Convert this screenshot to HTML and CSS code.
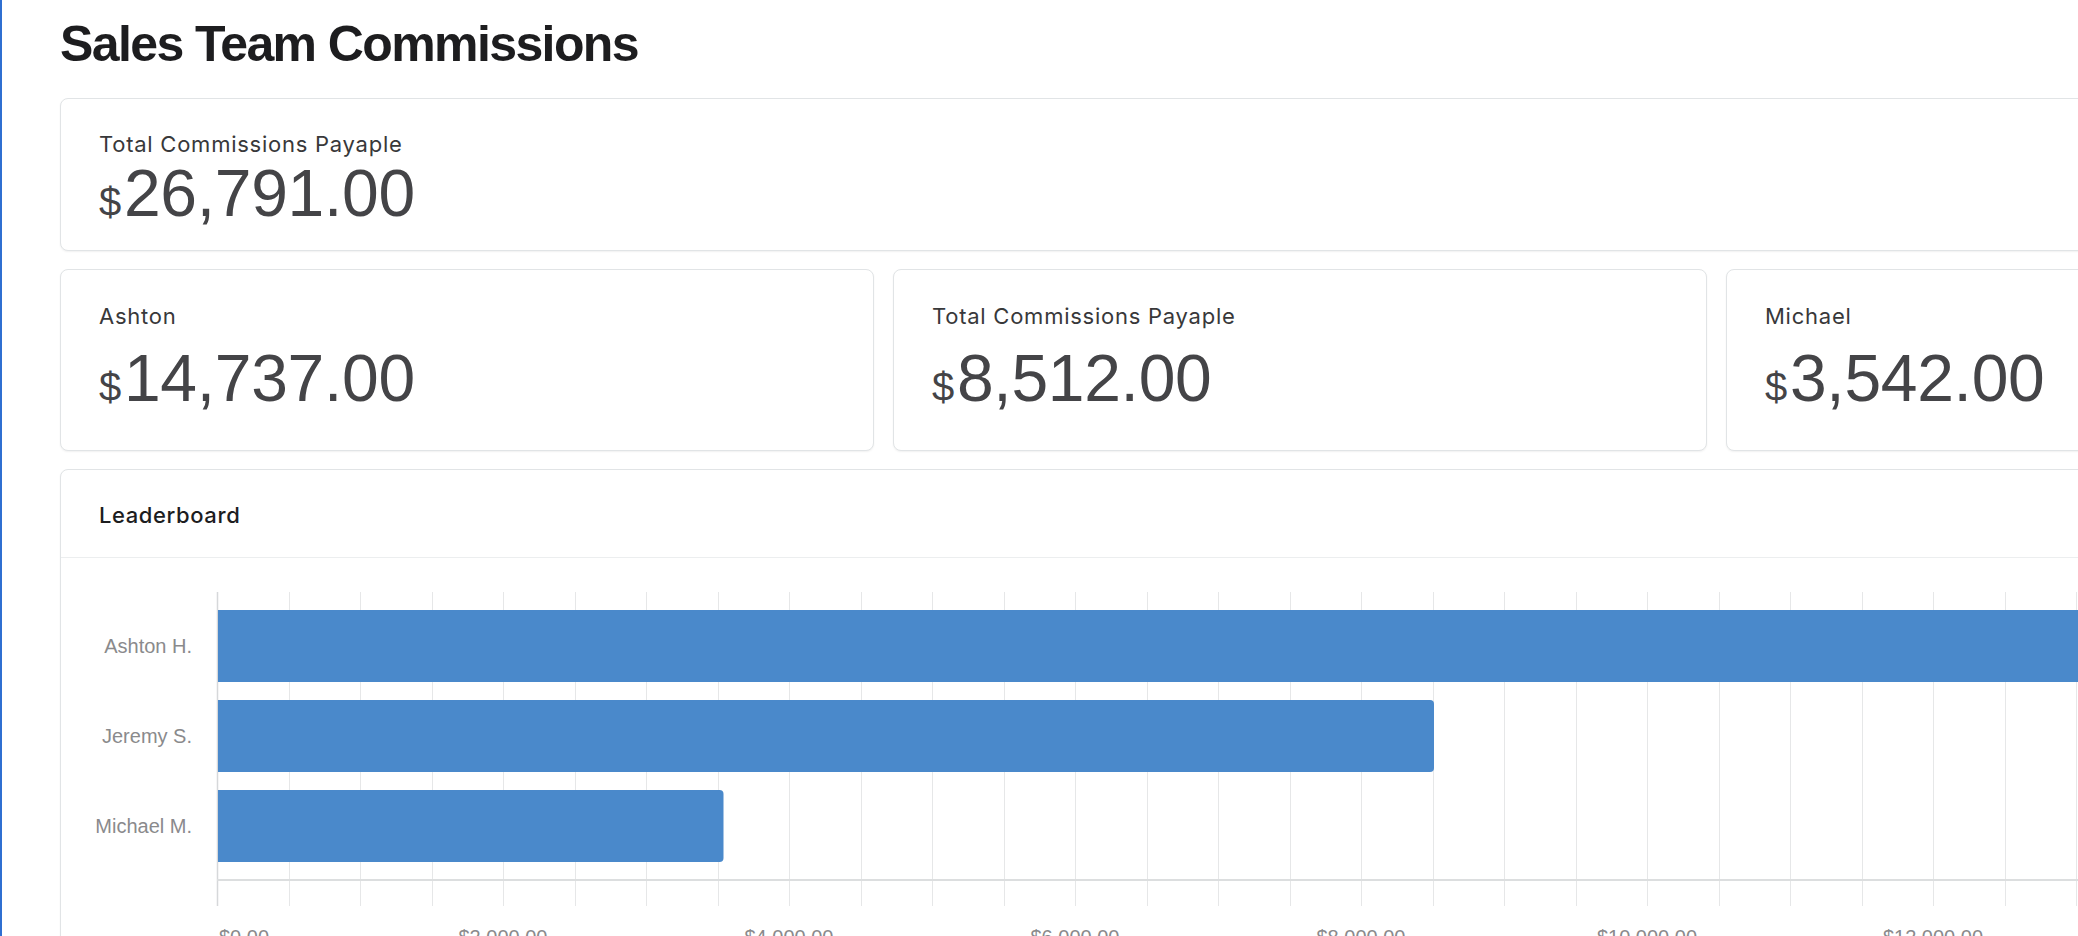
FILE: index.html
```html
<!DOCTYPE html>
<html lang="en">
<head>
<meta charset="utf-8">
<title>Sales Team Commissions</title>
<link rel="stylesheet" href="styles.css">
</head>
<body>
<div class="frame">
  <h1 class="title">Sales Team Commissions</h1>

  <section class="card stat stat-total">
    <div class="stat-label">Total Commissions Payaple</div>
    <div class="stat-value"><span class="cur">$</span>26,791.00</div>
  </section>

  <div class="stat-row">
    <section class="card stat">
      <div class="stat-label">Ashton</div>
      <div class="stat-value"><span class="cur">$</span>14,737.00</div>
    </section>
    <section class="card stat">
      <div class="stat-label">Total Commissions Payaple</div>
      <div class="stat-value"><span class="cur">$</span>8,512.00</div>
    </section>
    <section class="card stat">
      <div class="stat-label">Michael</div>
      <div class="stat-value"><span class="cur">$</span>3,542.00</div>
    </section>
  </div>

  <section class="card board">
    <header class="board-head">Leaderboard</header>
    <div class="board-body">
      <svg class="chart" width="2478" height="420" viewBox="0 0 2478 420" xmlns="http://www.w3.org/2000/svg">
        <g class="grid" stroke="#e6e7e8" stroke-width="1">
          <line x1="228.5" y1="34" x2="228.5" y2="348"/>
          <line x1="299.5" y1="34" x2="299.5" y2="348"/>
          <line x1="371.5" y1="34" x2="371.5" y2="348"/>
          <line x1="442.5" y1="34" x2="442.5" y2="348"/>
          <line x1="514.5" y1="34" x2="514.5" y2="348"/>
          <line x1="585.5" y1="34" x2="585.5" y2="348"/>
          <line x1="657.5" y1="34" x2="657.5" y2="348"/>
          <line x1="728.5" y1="34" x2="728.5" y2="348"/>
          <line x1="800.5" y1="34" x2="800.5" y2="348"/>
          <line x1="871.5" y1="34" x2="871.5" y2="348"/>
          <line x1="943.5" y1="34" x2="943.5" y2="348"/>
          <line x1="1014.5" y1="34" x2="1014.5" y2="348"/>
          <line x1="1086.5" y1="34" x2="1086.5" y2="348"/>
          <line x1="1157.5" y1="34" x2="1157.5" y2="348"/>
          <line x1="1229.5" y1="34" x2="1229.5" y2="348"/>
          <line x1="1300.5" y1="34" x2="1300.5" y2="348"/>
          <line x1="1372.5" y1="34" x2="1372.5" y2="348"/>
          <line x1="1443.5" y1="34" x2="1443.5" y2="348"/>
          <line x1="1515.5" y1="34" x2="1515.5" y2="348"/>
          <line x1="1586.5" y1="34" x2="1586.5" y2="348"/>
          <line x1="1658.5" y1="34" x2="1658.5" y2="348"/>
          <line x1="1729.5" y1="34" x2="1729.5" y2="348"/>
          <line x1="1801.5" y1="34" x2="1801.5" y2="348"/>
          <line x1="1872.5" y1="34" x2="1872.5" y2="348"/>
          <line x1="1944.5" y1="34" x2="1944.5" y2="348"/>
          <line x1="2015.5" y1="34" x2="2015.5" y2="348"/>
          <line x1="2087.5" y1="34" x2="2087.5" y2="348"/>
          <line x1="2158.5" y1="34" x2="2158.5" y2="348"/>
          <line x1="2230.5" y1="34" x2="2230.5" y2="348"/>
          <line x1="2301.5" y1="34" x2="2301.5" y2="348"/>
        </g>
        <line x1="156.5" y1="34" x2="156.5" y2="348" stroke="#d6d8da" stroke-width="1.5"/>
        <line x1="156" y1="322" x2="2302" y2="322" stroke="#dcdedf" stroke-width="2"/>
        <g class="bars" fill="#4a89cb">
          <path d="M157 52 H2259 a4 4 0 0 1 4 4 V120 a4 4 0 0 1 -4 4 H157 Z"/>
          <path d="M157 142 H1369 a4 4 0 0 1 4 4 V210 a4 4 0 0 1 -4 4 H157 Z"/>
          <path d="M157 232 H658.5 a4 4 0 0 1 4 4 V300 a4 4 0 0 1 -4 4 H157 Z"/>
        </g>
        <g class="ylabels" text-anchor="end">
          <text x="131" y="95">Ashton H.</text>
          <text x="131" y="185">Jeremy S.</text>
          <text x="131" y="275">Michael M.</text>
        </g>
        <g class="xlabels" text-anchor="middle">
          <text x="158" y="386" text-anchor="start">$0.00</text>
          <text x="442" y="386">$2,000.00</text>
          <text x="728" y="386">$4,000.00</text>
          <text x="1014" y="386">$6,000.00</text>
          <text x="1300" y="386">$8,000.00</text>
          <text x="1586" y="386">$10,000.00</text>
          <text x="1872" y="386">$12,000.00</text>
          <text x="2158" y="386">$14,000.00</text>
        </g>
      </svg>
    </div>
  </section>
</div>
</body>
</html>
```
FILE: styles.css
```css
html, body {
  margin: 0;
  padding: 0;
  overflow: hidden;
  background: #ffffff;
}

.frame {
  box-sizing: border-box;
  width: 2600px;
  min-height: 936px;
  border-left: 2px solid #2f6fd1;
  padding: 14px 0 0 58px;
}

.title {
  margin: 0 0 24px;
  font-family: "Liberation Sans", Arial, sans-serif;
  font-weight: 700;
  font-size: 50px;
  line-height: 60px;
  letter-spacing: -1.6px;
  color: #1d1d1f;
}

.card {
  box-sizing: border-box;
  width: 2480px;
  background: #ffffff;
  border: 1px solid #e1e4e6;
  border-radius: 8px;
  box-shadow: 0 1px 2px rgba(0, 0, 0, 0.06);
}

.stat-total {
  padding: 32px 38px 21px;
  margin-bottom: 18px;
}

.stat-row {
  display: grid;
  grid-template-columns: repeat(3, 1fr);
  gap: 19px;
  width: 2480px;
  margin-bottom: 18px;
}

.stat-row .card {
  width: auto;
  padding: 33px 38px 36px;
}

.stat-label {
  font-family: Inter, "Liberation Sans", sans-serif;
  font-weight: 400;
  font-size: 22px;
  line-height: 26px;
  letter-spacing: 0.75px;
  color: #38383a;
}

.stat-value {
  font-family: "Liberation Sans", Arial, sans-serif;
  font-weight: 400;
  font-size: 66px;
  line-height: 72px;
  letter-spacing: -0.3px;
  color: #444447;
}

.stat-row .stat-value {
  margin-top: 13px;
}

.cur {
  font-size: 40px;
  line-height: 1;
  margin-right: 3px;
}

.board-head {
  padding: 32px 38px 29px;
  border-bottom: 1px solid #eceeef;
  font-family: Inter, "Liberation Sans", sans-serif;
  font-weight: 500;
  font-size: 22px;
  line-height: 26px;
  letter-spacing: 0.6px;
  color: #1d1d1f;
}

.board-body {
  height: 420px;
}

.chart {
  display: block;
}

.chart text {
  font-family: "Liberation Sans", Arial, sans-serif;
  font-size: 20px;
  fill: #8a8a8c;
}
```
